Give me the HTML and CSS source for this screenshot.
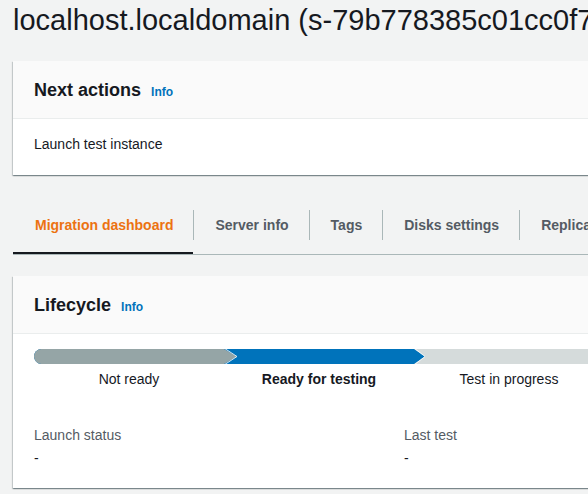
FILE: index.html
```html
<!DOCTYPE html>
<html lang="en">
<head>
<meta charset="utf-8">
<title>localhost.localdomain</title>
<link rel="stylesheet" href="styles.css">
</head>
<body>
<div class="page">
  <h1 class="title">localhost.localdomain (s-79b778385c01cc0f7)</h1>

  <section class="card">
    <div class="card-header">
      <h2 class="card-title">Next actions</h2>
      <a class="info" href="#">Info</a>
    </div>
    <div class="card-body">Launch test instance</div>
  </section>

  <nav class="tabs">
    <a class="tab tab-active" href="#"><span class="tab-label">Migration dashboard</span></a>
    <a class="tab" href="#"><span class="tab-label">Server info</span></a>
    <a class="tab" href="#"><span class="tab-label">Tags</span></a>
    <a class="tab" href="#"><span class="tab-label">Disks settings</span></a>
    <a class="tab" href="#"><span class="tab-label">Replication settings</span></a>
    <a class="tab" href="#"><span class="tab-label">Post-launch settings</span></a>
  </nav>

  <section class="card">
    <div class="card-header">
      <h2 class="card-title">Lifecycle</h2>
      <a class="info" href="#">Info</a>
    </div>
    <div class="card-body lifecycle-body">
      <div class="progress">
        <svg class="progress-svg" width="760" height="15" viewBox="0 0 760 15" aria-hidden="true">
          <rect x="0" y="0" width="760" height="15" fill="#d5dbdb"/>
          <polygon points="0,0 380,0 391,7.5 380,15 0,15" fill="#0073bb"/>
          <polygon points="0,0 190,0 203,7.5 190,15 0,15" fill="#95a5a6"/>
          <polyline points="190,-1 203,7.5 190,16" fill="none" stroke="#ffffff" stroke-width="1" stroke-opacity="0.8"/>
          <polyline points="380,-1 391,7.5 380,16" fill="none" stroke="#ffffff" stroke-width="1" stroke-opacity="0.8"/>
        </svg>
      </div>
      <div class="steps">
        <div class="step">Not ready</div>
        <div class="step step-current">Ready for testing</div>
        <div class="step">Test in progress</div>
        <div class="step">Ready for cutover</div>
      </div>
      <div class="details">
        <div class="detail">
          <div class="detail-label">Launch status</div>
          <div class="detail-value">-</div>
        </div>
        <div class="detail">
          <div class="detail-label">Last test</div>
          <div class="detail-value">-</div>
        </div>
      </div>
    </div>
  </section>
</div>
</body>
</html>
```
FILE: styles.css
```css
html, body {
  margin: 0;
  padding: 0;
  overflow: hidden;
}

body {
  background: #f2f3f3;
  color: #16191f;
  font-family: "Liberation Sans", Arial, sans-serif;
  font-size: 14px;
  line-height: 22px;
}

.page {
  width: 800px;
  padding: 0 0 20px 13px;
}

.title {
  margin: 0 0 21px 0;
  font-size: 29px;
  line-height: 40px;
  font-weight: 400;
  white-space: nowrap;
  color: #16191f;
}

.card {
  background: #ffffff;
  box-shadow: 0 1px 1px 0 rgba(0, 28, 36, 0.3),
              1px 1px 1px 0 rgba(0, 28, 36, 0.15),
              -1px 1px 1px 0 rgba(0, 28, 36, 0.15);
}

.card-header {
  display: flex;
  align-items: baseline;
  gap: 10px;
  height: 22px;
  padding: 18px 20px 17px 21px;
  background: #fafafa;
  border-bottom: 1px solid #eaeded;
}

.card-title {
  margin: 0;
  font-size: 18px;
  line-height: 22px;
  font-weight: 700;
  color: #16191f;
}

.info {
  font-size: 12px;
  line-height: 16px;
  font-weight: 700;
  color: #0073bb;
  text-decoration: none;
}

.card-body {
  padding: 14px 20px 20px 21px;
}

/* Tabs */
.tabs {
  display: flex;
  margin-top: 23px;
  border-bottom: 1px solid #aab7b8;
  white-space: nowrap;
}

.tab {
  display: block;
  padding: 12px 0 12px 0;
  border-bottom: 2px solid transparent;
  color: #545b64;
  font-weight: 700;
  text-decoration: none;
  flex: none;
}

.tab-label {
  display: block;
  padding: 4px 20px 4px 21px;
  border-left: 1px solid #aab7b8;
}

.tab-active {
  border-bottom-color: #16191f;
  color: #ec7211;
}

.tab-active .tab-label {
  border-left-color: transparent;
}

.tabs + .card {
  margin-top: 21px;
}

/* Lifecycle */
.lifecycle-body {
  padding-top: 15px;
  padding-bottom: 19px;
}

.progress {
  width: 760px;
  height: 15px;
  border-radius: 8px;
  overflow: hidden;
}

.progress-svg {
  display: block;
}

.steps {
  display: grid;
  grid-template-columns: repeat(4, 190px);
  margin-top: 4px;
}

.step {
  text-align: center;
  color: #16191f;
}

.step-current {
  font-weight: 700;
}

.details {
  display: grid;
  grid-template-columns: 370px 370px;
  margin-top: 34px;
}

.detail-label {
  color: #545b64;
}

.detail-value {
  margin-top: 1px;
  color: #16191f;
}
```
